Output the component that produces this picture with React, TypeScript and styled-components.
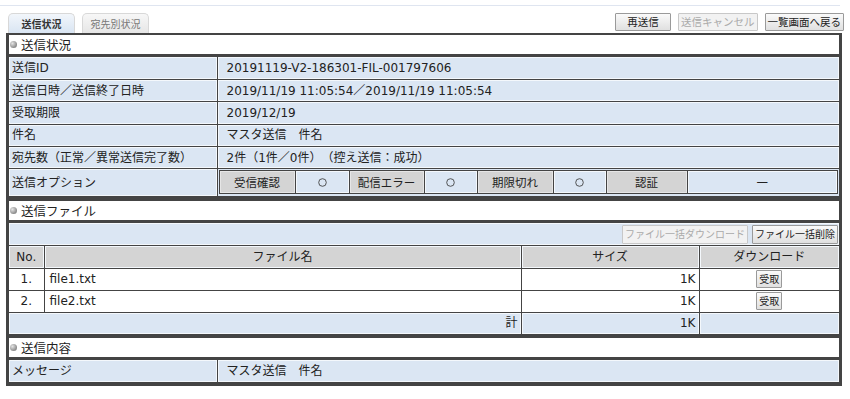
import React from "react";
import styled, { createGlobalStyle, css } from "styled-components";

const Global = createGlobalStyle`
  html, body { margin: 0; padding: 0; background: #fff; }
  body { font-family: "DejaVu Sans", "Noto Sans CJK JP", sans-serif; color: #222; }
  * { box-sizing: border-box; }
`;

const Page = styled.div`
  width: 850px;
  padding: 5px 8px 0 6px;
`;

const TopLine = styled.div`
  height: 1px;
  background: #dfe5f0;
  margin: 0 2px 7px -6px;
`;

const BarRow = styled.div`
  display: flex;
  align-items: flex-end;
  justify-content: space-between;
  height: 20px;
`;

const Tabs = styled.div`
  display: flex;
  gap: 7px;
  padding-left: 2px;
  align-items: flex-end;
`;

const Tab = styled.div<{ $active?: boolean }>`
  width: 67px;
  height: 20px;
  border: 1px solid #d8d8d8;
  border-bottom: none;
  border-radius: 5px 5px 0 0;
  font-family: "Noto Sans CJK JP", sans-serif;
  font-size: 10px;
  line-height: 19px;
  text-align: center;
  ${(p) =>
    p.$active
      ? css`
          background: linear-gradient(#f2f6fb, #d9e5f3);
          color: #333;
          font-weight: bold;
        `
      : css`
          background: linear-gradient(#f7f7f7, #e6e6e6);
          color: #777;
        `}
`;

const Actions = styled.div`
  display: flex;
  gap: 7px;
  padding-bottom: 2px;
  margin-right: -2px;
`;

const Btn = styled.button<{ $disabled?: boolean; $w?: number }>`
  font-family: "Noto Sans CJK JP", sans-serif;
  font-size: 10.5px;
  height: 18px;
  line-height: 16px;
  padding: 0 2px;
  border: 1px solid ${(p) => (p.$disabled ? "#c8c8c8" : "#9a9a9a")};
  background: ${(p) => (p.$disabled ? "#f2f2f2" : "linear-gradient(#fafafa, #e0e0e0)")};
  color: ${(p) => (p.$disabled ? "#aaa" : "#222")};
  border-radius: 1px;
  cursor: default;
  min-width: ${(p) => (p.$w ? p.$w + "px" : "auto")};
`;

const Frame = styled.div`
  width: 836px;
  border-left: 3px solid #444;
  border-right: 3px solid #444;
  border-bottom: 3px solid #444;
`;

const Section = styled.div<{ $top: number }>`
  border-top: ${(p) => p.$top}px solid #444;
`;

const SectionTitle = styled.div`
  height: 22px;
  display: flex;
  align-items: center;
  gap: 4px;
  padding-left: 1px;
  font-size: 12.5px;
  background: #fff;
  border-bottom: 3px solid #444;
`;

const Bullet = styled.span`
  width: 7px;
  height: 7px;
  border-radius: 50%;
  background: radial-gradient(circle at 35% 35%, #e4e4e4, #8a8a8a 70%, #666);
`;

const Table = styled.table`
  width: 100%;
  border-collapse: collapse;
  table-layout: fixed;
  font-size: 12px;
`;

const Cell = styled.td<{
  $bg?: "blue" | "gray" | "white";
  $align?: "left" | "center" | "right";
  $pad?: number;
  $h?: number;
}>`
  height: ${(p) => p.$h ?? 22.4}px;
  padding: 0 ${(p) => (p.$pad ?? 3)}px;
  border: 1px solid #444;
  box-shadow: inset 0 0 0 1px ${(p) => (p.$bg === "white" ? "#fff" : "#f4f8fc")};
  background: ${(p) =>
    p.$bg === "gray" ? "#d4d4d4" : p.$bg === "white" ? "#fff" : "#dbe6f3"};
  text-align: ${(p) => p.$align ?? "left"};
  vertical-align: middle;
  line-height: 18px;
  white-space: nowrap;
  overflow: hidden;
`;

const Row = styled.tr`
  &:first-child td { border-top: none; }
  td:first-child { border-left: none; }
  td:last-child { border-right: none; }
`;

const OptCell = styled.td`
  padding: 1px 1px 2px 1px;
  border: 1px solid #444;
  border-right: none;
  background: #dbe6f3;
`;

const OptGrid = styled.div`
  display: grid;
  grid-template-columns: 76px 54px 75px 53px 76px 53px 81px 1fr;
  border: 1px solid #444;
  height: 24px;
`;

const OptBox = styled.div<{ $gray?: boolean }>`
  display: flex;
  align-items: center;
  justify-content: center;
  font-size: 11.5px;
  background: ${(p) => (p.$gray ? "#d4d4d4" : "#dbe6f3")};
  border-right: 1px solid #444;
  box-shadow: inset 0 0 0 1px ${(p) => (p.$gray ? "#e6e6e6" : "#f4f8fc")};
  &:last-child { border-right: none; }
`;

const Toolbar = styled.div`
  height: 23px;
  background: #dbe6f3;
  display: flex;
  justify-content: flex-end;
  align-items: center;
  gap: 4px;
  padding-right: 1px;
  border-bottom: 1px solid #444;
  box-shadow: inset 0 0 0 1px #f4f8fc;
`;

const SmallBtn = styled.button<{ $disabled?: boolean }>`
  font-family: "Noto Sans CJK JP", sans-serif;
  font-size: 10px;
  height: 18px;
  line-height: 16px;
  padding: 0 2px;
  border: 1px solid #9a9a9a;
  background: linear-gradient(#fafafa, #e0e0e0);
  color: #222;
  border-radius: 1px;
  ${(p) =>
    p.$disabled &&
    css`
      color: #aaa;
      border-color: #c8c8c8;
      background: #f2f2f2;
    `}
`;

const ToolBtn = styled(SmallBtn)`
  height: 19px;
`;

const Circle = () => (
  <svg width="9" height="9" viewBox="0 0 9 9">
    <circle cx="4.5" cy="4.5" r="3.8" fill="none" stroke="#444" strokeWidth="0.9" />
  </svg>
);

const infoRows: [string, string][] = [
  ["送信ID", "20191119-V2-186301-FIL-001797606"],
  ["送信日時／送信終了日時", "2019/11/19 11:05:54／2019/11/19 11:05:54"],
  ["受取期限", "2019/12/19"],
  ["件名", "マスタ送信　件名"],
  ["宛先数（正常／異常送信完了数）", "2件（1件／0件）　（控え送信：成功）"],
];

const files = [
  { no: "1.", name: "file1.txt", size: "1K" },
  { no: "2.", name: "file2.txt", size: "1K" },
];

export default function App() {
  return (
    <Page>
      <Global />
      <TopLine />
      <BarRow>
        <Tabs>
          <Tab $active>送信状況</Tab>
          <Tab>宛先別状況</Tab>
        </Tabs>
        <Actions>
          <Btn $w={56}>再送信</Btn>
          <Btn $disabled>送信キャンセル</Btn>
          <Btn>一覧画面へ戻る</Btn>
        </Actions>
      </BarRow>
      <Frame>
        <Section $top={2}>
          <SectionTitle>
            <Bullet />
            送信状況
          </SectionTitle>
          <Table>
            <colgroup>
              <col style={{ width: 208 }} />
              <col />
            </colgroup>
            <tbody>
              {infoRows.map(([k, v]) => (
                <Row key={k}>
                  <Cell>{k}</Cell>
                  <Cell $pad={9}>{v}</Cell>
                </Row>
              ))}
              <Row>
                <Cell $h={26}>送信オプション</Cell>
                <OptCell>
                  <OptGrid>
                    <OptBox $gray>受信確認</OptBox>
                    <OptBox>
                      <Circle />
                    </OptBox>
                    <OptBox $gray>配信エラー</OptBox>
                    <OptBox>
                      <Circle />
                    </OptBox>
                    <OptBox $gray>期限切れ</OptBox>
                    <OptBox>
                      <Circle />
                    </OptBox>
                    <OptBox $gray>認証</OptBox>
                    <OptBox>—</OptBox>
                  </OptGrid>
                </OptCell>
              </Row>
            </tbody>
          </Table>
        </Section>
        <Section $top={4}>
          <SectionTitle>
            <Bullet />
            送信ファイル
          </SectionTitle>
          <Toolbar>
            <ToolBtn $disabled>ファイル一括ダウンロード</ToolBtn>
            <ToolBtn>ファイル一括削除</ToolBtn>
          </Toolbar>
          <Table>
            <colgroup>
              <col style={{ width: 35 }} />
              <col style={{ width: 477 }} />
              <col style={{ width: 178 }} />
              <col />
            </colgroup>
            <tbody>
              <Row>
                <Cell $bg="gray" $align="center" $h={22}>No.</Cell>
                <Cell $bg="gray" $align="center" $h={22}>ファイル名</Cell>
                <Cell $bg="gray" $align="center" $h={22}>サイズ</Cell>
                <Cell $bg="gray" $align="center" $h={22}>ダウンロード</Cell>
              </Row>
              {files.map((f) => (
                <Row key={f.no}>
                  <Cell $bg="white" $align="center" $h={22}>{f.no}</Cell>
                  <Cell $bg="white" $pad={5} $h={22}>{f.name}</Cell>
                  <Cell $bg="white" $align="right" $h={22}>{f.size}</Cell>
                  <Cell $bg="white" $align="center" $h={22}>
                    <SmallBtn>受取</SmallBtn>
                  </Cell>
                </Row>
              ))}
              <Row>
                <Cell colSpan={2} $align="right" $h={22}>計</Cell>
                <Cell $align="right" $h={22}>1K</Cell>
                <Cell $h={22} />
              </Row>
            </tbody>
          </Table>
        </Section>
        <Section $top={3}>
          <SectionTitle>
            <Bullet />
            送信内容
          </SectionTitle>
          <Table>
            <colgroup>
              <col style={{ width: 208 }} />
              <col />
            </colgroup>
            <tbody>
              <Row>
                <Cell>メッセージ</Cell>
                <Cell $pad={9}>マスタ送信　件名</Cell>
              </Row>
            </tbody>
          </Table>
        </Section>
      </Frame>
    </Page>
  );
}
